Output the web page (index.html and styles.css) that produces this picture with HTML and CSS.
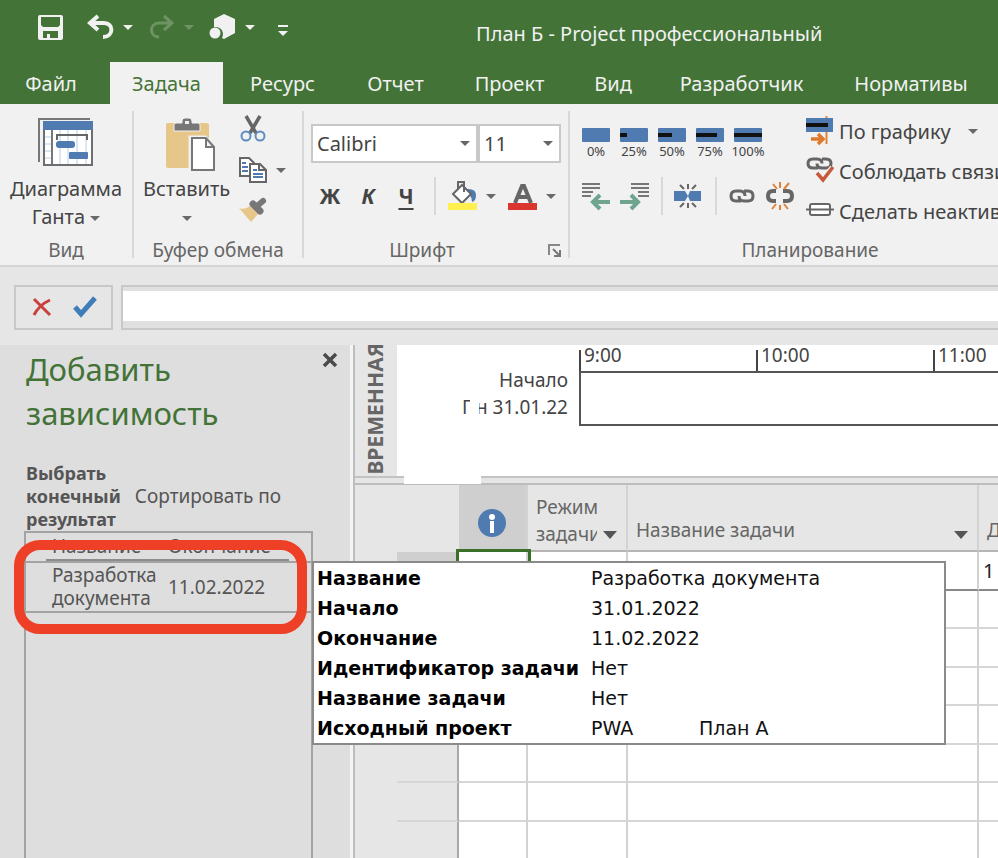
FILE: index.html
```html
<!DOCTYPE html>
<html lang="ru">
<head>
<meta charset="UTF-8">
<title>План Б - Project профессиональный</title>
<link rel="stylesheet" href="styles.css">
</head>
<body>
<header class="titlebar">
	<div class="quick">
		<button type="button" aria-label="Сохранить">
			<svg width="26" height="26" viewBox="0 0 26 26"><path d="M1 3q0-2 2-2h21q2 0 2 2v21q0 2-2 2H3q-2 0-2-2z" fill="#f1f1f1"/><path d="M4 3h19v8l-2 2H6l-2-2z" fill="#437337"/><path d="M6 17h15v7H6z" fill="#437337"/><path d="M10 20h3v4h-3z" fill="#f1f1f1"/></svg>
		</button>
		<button type="button" class="undo" aria-label="Отменить">
			<svg width="28" height="26" viewBox="0 0 28 26"><path d="M11 2L3 9l8 7M4 9h13c10 0 10 14-1 14" fill="none" stroke="#f1f1f1" stroke-width="4"/></svg>
			<span class="caret light"></span>
		</button>
		<button type="button" class="redo" aria-label="Вернуть">
			<svg width="28" height="26" viewBox="0 0 28 26"><path d="M16 2l8 7-8 7M23 9H11C1 9 1 23 11 23" fill="none" stroke="#6d9462" stroke-width="3"/></svg>
			<span class="caret faded"></span>
		</button>
		<button type="button" class="shape" aria-label="Фигуры">
			<svg width="28" height="26" viewBox="0 0 28 26"><path d="M15 0l11 5v14l-11 6-2-1c3-6-1-12-8-11V5z" fill="#f1f1f1"/><circle cx="6" cy="19" r="5.500" fill="#f1f1f1"/></svg>
			<span class="caret light"></span>
		</button>
		<button type="button" class="more" aria-label="Настройка панели">
			<svg width="10" height="12" viewBox="0 0 10 12"><path d="M0 1h10" stroke="#f1f1f1" stroke-width="2"/><path d="M0 6h10l-5 5z" fill="#f1f1f1"/></svg>
		</button>
	</div>
	<h1>План Б - Project профессиональный</h1>
</header>
<nav class="tabs">
	<button type="button">Файл</button>
	<button type="button" class="active">Задача</button>
	<button type="button">Ресурс</button>
	<button type="button">Отчет</button>
	<button type="button">Проект</button>
	<button type="button">Вид</button>
	<button type="button">Разработчик</button>
	<button type="button">Нормативы</button>
</nav>

<div class="ribbon">
	<section class="group group-view">
		<button type="button" class="big">
			<svg width="56" height="48" viewBox="0 0 56 48"><path d="M1 44V1h51" fill="none" stroke="#777" stroke-width="2"/><path d="M6 4h48v43H6z" fill="#fff" stroke="#6e6e6e" stroke-width="2"/><path d="M5 3h50v9H5z" fill="#4f7bb0"/><path d="M22 12v34M30 12v34M39 12v34M48 12v34M7 19h6M7 26h6M7 33h6M7 40h6" stroke="#b5cfe8"/><path d="M14 12v34" stroke="#777" stroke-width="2"/><path d="M19 22v-5h30v5" fill="none" stroke="#666" stroke-width="2"/><rect x="18" y="23" width="19" height="7" rx="3" fill="#4f7bb0"/><rect x="31" y="34" width="19" height="7" rx="1" fill="#4f7bb0"/></svg>
			<span>Диаграмма<br>Ганта <i class="caret"></i></span>
		</button>
		<h2>Вид</h2>
	</section>
	<section class="group group-clip">
		<div class="clip">
			<button type="button" class="big paste">
				<svg width="50" height="54" viewBox="0 0 50 54"><rect y="5" width="43" height="45" rx="2" fill="#e7c789"/><path d="M8 13V7q0-2 2-2h6V3q0-3 3-3h4q3 0 3 3v2h6q2 0 2 2v6z" fill="#777" stroke="#f1f1f1"/><path d="M19 3h4v3h-4z" fill="#f1f1f1"/><path d="M25 20h14l10 10v23H25z" fill="#fff" stroke="#f1f1f1" stroke-width="5"/><path d="M26 20h14l8 9v23H26zM40 20v9h8" fill="#fff" stroke="#777" stroke-width="2"/></svg>
				<span>Вставить<br><i class="caret"></i></span>
			</button>
			<div class="stack">
				<button type="button" aria-label="Вырезать">
					<svg width="28" height="28" viewBox="0 0 28 28"><path d="M7 1l10 17M21 1L11 18" stroke="#666" stroke-width="3.500"/><circle cx="7" cy="21" r="4.500" fill="none" stroke="#5b8cc2" stroke-width="2"/><circle cx="21" cy="21" r="4.500" fill="none" stroke="#5b8cc2" stroke-width="2"/></svg>
				</button>
				<button type="button" aria-label="Копировать">
					<svg width="28" height="26" viewBox="0 0 28 26"><path d="M1 1h9l5 5v13H1z" fill="#fff" stroke="#666" stroke-width="2"/><path d="M3 6h4M3 10h6M3 14h6" stroke="#4f7bb0" stroke-width="2"/><path d="M11 7h10l6 6v12H11zM20 7v6h7" fill="#fff" stroke="#666" stroke-width="2"/><path d="M14 13h4M14 17h10M14 20h10" stroke="#4f7bb0" stroke-width="2"/></svg>
					<span class="caret"></span>
				</button>
				<button type="button" aria-label="Формат по образцу">
					<svg width="28" height="26" viewBox="0 0 28 26"><path d="M0 11c5 2 8 0 11-2l8 8-7 8z" fill="#e7c789"/><path d="M14 7l7 7" stroke="#777" stroke-width="7" stroke-linecap="round"/><path d="M18 9l6-5" stroke="#777" stroke-width="6" stroke-linecap="round"/></svg>
				</button>
			</div>
		</div>
		<h2>Буфер обмена</h2>
	</section>
	<section class="group group-font">
		<div class="pickers">
			<label class="pick wide"><select aria-label="Шрифт"><option>Calibri</option></select></label>
			<label class="pick"><select aria-label="Размер"><option>11</option></select></label>
		</div>
		<div class="tools">
			<button type="button" class="glyph">Ж</button>
			<button type="button" class="glyph italic">К</button>
			<button type="button" class="glyph under">Ч</button>
			<i class="line"></i>
			<button type="button" class="color" aria-label="Цвет фона">
				<svg width="30" height="30" viewBox="0 0 30 30"><path d="M18 8q10-1 10 6 0 6-4 7q0-6-5-9z" fill="#4f7bb0"/><path d="M14 4l9 9-9 9-9-9z" fill="#fff" stroke="#666" stroke-width="2"/><path d="M10 9V1h6v10" fill="none" stroke="#666" stroke-width="2"/><path d="M0 22h29v7H0z" fill="#fff04f"/></svg>
				<span class="caret"></span>
			</button>
			<button type="button" class="color" aria-label="Цвет текста">
				<svg width="30" height="30" viewBox="0 0 30 30"><path d="M7 22l7-17h2l7 17M10 16h10" fill="none" stroke="#666" stroke-width="4"/><path d="M0 22h29v7H0z" fill="#db352f"/></svg>
				<span class="caret"></span>
			</button>
		</div>
		<h2>Шрифт</h2>
		<button type="button" class="launch" aria-label="Параметры шрифта">
			<svg width="14" height="14" viewBox="0 0 14 14"><path d="M1 11V1h11" fill="none" stroke="#888" stroke-width="2"/><path d="M5 5l7 7M12 6v6H6" fill="none" stroke="#777" stroke-width="2"/></svg>
		</button>
	</section>
	<section class="group group-plan">
		<div class="plan">
			<div class="plan-left">
				<div class="percents">
					<button type="button"><svg width="28" height="14"><rect width="28" height="14" rx="1" fill="#4f7bb0"/></svg>0%</button>
					<button type="button"><svg width="28" height="14"><rect width="28" height="14" rx="1" fill="#4f7bb0"/><path d="M0 7h7" stroke="#111" stroke-width="4"/></svg>25%</button>
					<button type="button"><svg width="28" height="14"><rect width="28" height="14" rx="1" fill="#4f7bb0"/><path d="M0 7h14" stroke="#111" stroke-width="4"/></svg>50%</button>
					<button type="button"><svg width="28" height="14"><rect width="28" height="14" rx="1" fill="#4f7bb0"/><path d="M0 7h21" stroke="#111" stroke-width="4"/></svg>75%</button>
					<button type="button"><svg width="28" height="14"><rect width="28" height="14" rx="1" fill="#4f7bb0"/><path d="M0 7h28" stroke="#111" stroke-width="4"/></svg>100%</button>
				</div>
				<div class="links">
					<button type="button" aria-label="Повысить уровень"><svg width="30" height="30" viewBox="0 0 30 30"><path d="M0 3h18M0 7h18M0 11h11M0 15h9" stroke="#777" stroke-width="2"/><path d="M28 21H11M18 14l-7 7 7 7" fill="none" stroke="#6fa48e" stroke-width="4"/></svg></button>
					<button type="button" aria-label="Понизить уровень"><svg width="30" height="30" viewBox="0 0 30 30"><path d="M11 3h18M11 7h18M18 11h11M18 15h11" stroke="#777" stroke-width="2"/><path d="M0 21h18M11 14l7 7-7 7" fill="none" stroke="#6fa48e" stroke-width="4"/></svg></button>
					<i class="line"></i>
					<button type="button" aria-label="Прервать задачу"><svg width="30" height="30" viewBox="0 0 30 30"><path d="M0 10h11l3 5-3 5H0zM27 10H16l-2 5 2 5h11z" fill="#4f7bb0"/><path d="M14 3v5M6 4l4 4M22 4l-4 4M14 27v-5M6 26l4-4M22 26l-4-4" stroke="#666" stroke-width="2"/></svg></button>
					<i class="line"></i>
					<button type="button" aria-label="Связать задачи"><svg width="30" height="30" viewBox="0 0 30 30"><path d="M13 20H8q-5 0-5-5t5-5h4q5 0 5 5M16 10h4q5 0 5 5t-5 5h-4q-5 0-5-5" fill="none" stroke="#666" stroke-width="3"/></svg></button>
					<button type="button" aria-label="Разорвать связь"><svg width="28" height="30" viewBox="0 0 28 30"><path d="M10 10H7q-5 0-5 5t5 5h3M17 20h4q5 0 5-5t-5-5h-4" fill="none" stroke="#666" stroke-width="4"/><path d="M14 1v6M7 3l4 5M23 2l-5 6M14 29v-5M6 28l4-5M22 28l-4-5" stroke="#df8238" stroke-width="2"/></svg></button>
				</div>
			</div>
			<div class="plan-right">
				<button type="button"><svg width="28" height="30" viewBox="0 0 28 30"><path d="M20.500 0v28" stroke="#df8238" stroke-width="2"/><path d="M0 2h27v14H0z" fill="#4f7bb0"/><path d="M0 9h22" stroke="#111" stroke-width="4"/><path d="M5 23h11M12 18l5 5-5 5" fill="none" stroke="#df7a2c" stroke-width="3.500"/></svg>По графику<span class="caret"></span></button>
				<button type="button"><svg width="28" height="30" viewBox="0 0 28 30"><path d="M12 12H7q-5 0-5-4.500t5-4.500h4q5 0 5 4.500M16 3h4q5 0 5 4.500t-5 4.500h-4q-5 0-5-4.500" fill="none" stroke="#666" stroke-width="3"/><path d="M11 17l6 7 10-12" fill="none" stroke="#f1f1f1" stroke-width="7"/><path d="M11 17l6 7 10-13" fill="none" stroke="#c85a3c" stroke-width="3.500"/></svg>Соблюдать связи</button>
				<button type="button"><svg width="28" height="30" viewBox="0 0 28 30"><rect x="4" y="8" width="20" height="11" rx="2" fill="#fff" stroke="#666" stroke-width="2"/><path d="M0 13.500h28" stroke="#666" stroke-width="2"/></svg>Сделать неактивной</button>
			</div>
		</div>
		<h2>Планирование</h2>
	</section>
</div>

<div class="entry">
	<div class="entry-buttons">
		<button type="button" aria-label="Отмена"><svg width="24" height="24" viewBox="0 0 24 24"><path d="M4 3l16 16M4 19Q9 9 20 4" fill="none" stroke="#c9413a" stroke-width="3"/></svg></button>
		<button type="button" aria-label="Ввод"><svg width="26" height="24" viewBox="0 0 26 24"><path d="M3 11l6 7L23 2" fill="none" stroke="#3f7db8" stroke-width="5"/></svg></button>
	</div>
	<div class="entry-field"><input type="text" aria-label="Строка ввода"></div>
</div>

<div class="work">
	<aside class="side">
		<div class="side-head">
			<h2>Добавить зависимость</h2>
			<button type="button" aria-label="Закрыть"><svg width="16" height="16" viewBox="0 0 16 16"><path d="M2 2l12 12M14 2L2 14" stroke="#4a4a4a" stroke-width="3.500"/></svg></button>
		</div>
		<div class="side-bar">
			<b>Выбрать<br>конечный<br>результат</b>
			<a href="#">Сортировать по</a>
		</div>
		<table class="results">
			<thead><tr><th>Название</th><th>Окончание</th></tr></thead>
			<tbody><tr><td>Разработка<br>документа</td><td>11.02.2022</td></tr></tbody>
		</table>
	</aside>
	<main class="main">
		<div class="timeline">
			<div class="timeline-name"><span>ВРЕМЕННАЯ</span></div>
			<div class="timeline-body">
				<div class="start">Начало<br><span>Пн 31.01.22</span></div>
				<div class="scale">
					<div class="hours"><span>9:00</span><span>10:00</span><span>11:00</span></div>
					<div class="track"></div>
				</div>
			</div>
		</div>
		<div class="splitter"><i></i></div>
		<div class="sheet">
			<table class="grid">
				<colgroup><col class="c-num"><col class="c-info"><col class="c-mode"><col class="c-name"><col class="c-dur"></colgroup>
				<thead>
					<tr>
						<th></th>
						<th class="info"><svg width="28" height="28" viewBox="0 0 28 28"><circle cx="14" cy="14" r="14" fill="#4f7bb0"/><circle cx="14" cy="8" r="3" fill="#fff"/><path d="M12 12h4v12h-4z" fill="#fff"/></svg></th>
						<th class="mode"><div class="cut">Режим задачи</div><i class="drop"></i></th>
						<th>Название задачи<i class="drop"></i></th>
						<th>Длительность</th>
					</tr>
				</thead>
				<tbody>
					<tr class="current"><th></th><td class="focus"></td><td></td><td></td><td>1 день</td></tr>
					<tr><th></th><td></td><td></td><td></td><td></td></tr>
					<tr><th></th><td></td><td></td><td></td><td></td></tr>
					<tr><th></th><td></td><td></td><td></td><td></td></tr>
					<tr><th></th><td></td><td></td><td></td><td></td></tr>
					<tr><th></th><td></td><td></td><td></td><td></td></tr>
					<tr><th></th><td></td><td></td><td></td><td></td></tr>
					<tr><th></th><td></td><td></td><td></td><td></td></tr>
				</tbody>
			</table>
		</div>
	</main>
	<dl class="tip">
		<dt>Название</dt><dd>Разработка документа</dd>
		<dt>Начало</dt><dd>31.01.2022</dd>
		<dt>Окончание</dt><dd>11.02.2022</dd>
		<dt>Идентификатор задачи</dt><dd>Нет</dd>
		<dt>Название задачи</dt><dd>Нет</dd>
		<dt>Исходный проект</dt><dd><span>PWA</span>План А</dd>
	</dl>
	<div class="marker"></div>
</div>
</body>
</html>
```
FILE: styles.css
```css
* {
	box-sizing: border-box;
}

body {
	margin: 0;
	height: 100vh;
	display: flex;
	flex-direction: column;
	overflow: hidden;
	background-color: #e6e6e6;
	color: #444;
	font-family: "Noto Sans", "Open Sans", sans-serif;
	font-size: 20px;
}

h1, h2, dl, dd {
	margin: 0;
	font-weight: normal;
}

button {
	padding: 0;
	border: none;
	background: none;
	color: inherit;
	font: inherit;
	white-space: nowrap;
}

svg {
	display: block;
	flex: none;
}

.caret {
	display: inline-block;
	flex: none;
	border: 5px solid transparent;
	border-top-color: #6a6a6a;
	border-bottom: none;
	vertical-align: middle;
}
.caret.light {
	border-top-color: #f1f1f1;
}
.caret.faded {
	border-top-color: #6d9462;
}

/* title and tabs */
.titlebar {
	display: flex;
	flex: none;
	height: 62px;
	background-color: #437337;
	color: #f1f1f1;
}
.titlebar h1 {
	padding-top: 20px;
	font-size: 20px;
	line-height: 28px;
	white-space: nowrap;
}
.quick {
	display: flex;
	flex: none;
	width: 476px;
	padding: 14px 0 0 37px;
}
.quick button {
	display: flex;
	gap: 8px;
	height: 26px;
	align-items: center;
	margin-right: 24px;
}
.quick .undo, .quick .redo, .quick .shape {
	margin-right: 15px;
}
.quick .more {
	margin-left: 8px;
	padding-top: 8px;
}
.tabs {
	display: grid;
	flex: none;
	grid-template-columns: 110px 113px 119px 107px 121px 86px 171px 168px;
	height: 42px;
	background-color: #437337;
	color: #f1f1f1;
}
.tabs button:first-child {
	padding-right: 8px;
}
.tabs .active {
	background-color: #f1f1f1;
	color: #437337;
}

/* ribbon */
.ribbon {
	display: flex;
	flex: none;
	height: 163px;
	padding: 7px 0;
	background-color: #f1f1f1;
	border-bottom: 2px solid #d5d5d5;
	overflow: hidden;
}
.group {
	position: relative;
	display: flex;
	flex: none;
	flex-direction: column;
	border-right: 2px solid #d8d8d8;
}
.group h2 {
	margin-top: auto;
	color: #666;
	font-size: 19px;
	line-height: 16px;
	text-align: center;
}
.group-view {
	width: 134px;
}
.group-clip {
	width: 170px;
}
.group-font {
	width: 266px;
}
.group-font h2 {
	padding-right: 28px;
}
.group-plan {
	width: 482px;
}
.big {
	display: flex;
	flex-direction: column;
	align-items: center;
	height: 120px;
	line-height: 28px;
	padding-top: 7px;
	justify-content: space-between;
}
.paste svg {
	margin-left: 8px;
}
.clip {
	display: flex;
	padding-left: 9px;
	gap: 9px;
}
.stack {
	display: flex;
	flex-direction: column;
	gap: 14px;
	padding-top: 4px;
}
.stack button {
	display: flex;
	align-items: center;
	gap: 9px;
}
.pickers {
	display: grid;
	grid-template-columns: 167px 83px;
	margin: 13px 0 0 7px;
}
.pick {
	position: relative;
}
.pick::after {
	content: "";
	position: absolute;
	right: 8px;
	top: 17px;
	border: 5px solid transparent;
	border-top-color: #666;
	border-bottom: none;
}
.pick select {
	display: block;
	width: 100%;
	height: 39px;
	padding: 0 4px;
	appearance: none;
	border: 2px solid #c8c8c8;
	border-radius: 0;
	background-color: #fff;
	color: #444;
	font: inherit;
}
.tools {
	display: flex;
	align-items: center;
	height: 38px;
	margin-top: 14px;
	padding-left: 10px;
}
.glyph {
	width: 38px;
	padding-right: 6px;
	font-size: 21px;
	font-weight: bold;
}
.italic {
	font-style: italic;
}
.under {
	text-decoration: underline;
	text-underline-offset: 4px;
}
.line {
	width: 2px;
	height: 38px;
	background-color: #d8d8d8;
}
.tools .line {
	margin: 0 12px 0 6px;
}
.color {
	display: flex;
	align-items: center;
	gap: 8px;
	width: 60px;
}
.launch {
	position: absolute;
	right: 6px;
	bottom: 0;
}
.plan {
	display: flex;
	gap: 12px;
	padding-left: 12px;
}
.plan-left {
	padding-top: 17px;
}
.percents {
	display: grid;
	grid-template-columns: repeat(5, 28px);
	gap: 10px;
}
.percents button {
	display: flex;
	flex-direction: column;
	align-items: center;
	font-size: 13px;
	line-height: 18px;
}
.links {
	display: flex;
	align-items: center;
	gap: 8px;
	margin-top: 17px;
}
.links .line {
	margin: 0 3px;
}
.plan-right button {
	display: flex;
	align-items: center;
	gap: 5px;
	height: 40px;
}
.plan-right .caret {
	margin-left: 12px;
}

/* entry bar */
.entry {
	display: flex;
	flex: none;
	gap: 8px;
	height: 78px;
	padding: 18px 0 16px 14px;
}
.entry-buttons, .entry-field {
	height: 45px;
	border: 2px solid #c8c8c8;
}
.entry-buttons {
	display: flex;
	align-items: center;
	justify-content: center;
	gap: 18px;
	width: 99px;
}
.entry-field {
	flex: 1;
	padding: 4px 0 7px;
	border-right: none;
	background-color: #e0e0e0;
}
.entry-field input {
	display: block;
	width: 100%;
	height: 100%;
	padding: 0 8px;
	border: none;
	background-color: #fff;
	font: inherit;
}

/* work area */
.work {
	position: relative;
	display: flex;
	flex: 1;
	min-height: 0;
}
.side {
	display: flex;
	flex: none;
	flex-direction: column;
	width: 353px;
	padding-left: 24px;
	border-right: 3px solid #f4f4f4;
	background-color: #dedede;
}
.side-head {
	display: flex;
	justify-content: space-between;
	align-items: flex-start;
	padding: 2px 12px 0 2px;
}
.side-head h2 {
	width: 220px;
	color: #437337;
	font-size: 31px;
	line-height: 44px;
}
.side-head button {
	padding-top: 5px;
}
.side-bar {
	display: flex;
	align-items: center;
	gap: 14px;
	padding: 27px 0 0 2px;
	color: #555;
	font-size: 19px;
	line-height: 23px;
}
.side-bar b {
	font-size: 18px;
}
.side-bar a {
	color: inherit;
	text-decoration: none;
}
.results {
	display: block;
	flex: 1;
	width: 289px;
	border: 2px solid #a3a3a3;
	border-bottom: none;
	color: #555;
	font-size: 19px;
	line-height: 23px;
}
.results thead, .results tbody {
	display: block;
}
.results tr {
	display: grid;
	grid-template-columns: 116px 1fr;
	align-items: center;
	padding-left: 26px;
}
.results thead tr {
	height: 28px;
	margin: 0 22px 0 20px;
	padding-left: 6px;
	border-bottom: 2px solid #8c8c8c;
}
.results tbody tr {
	height: 52px;
	border: 2px solid #a3a3a3;
	border-width: 2px 0;
}
.results th, .results td {
	padding: 0;
	font-weight: normal;
	text-align: left;
}
.main {
	display: flex;
	flex: 1;
	flex-direction: column;
	min-width: 0;
	border-left: 2px solid #bdbdbd;
}
.timeline {
	display: flex;
	flex: none;
	height: 131px;
	overflow: hidden;
}
.timeline-name {
	display: flex;
	flex: none;
	align-items: flex-end;
	width: 42px;
	padding: 0 0 1px 7px;
	color: #666;
	font-size: 21px;
	font-weight: bold;
	line-height: 27px;
}
.timeline-name span {
	writing-mode: vertical-rl;
	transform: rotate(180deg);
	white-space: nowrap;
}
.timeline-body {
	display: flex;
	flex: 1;
	min-width: 0;
	background-color: #fff;
	font-size: 19px;
}
.start {
	flex: none;
	width: 182px;
	padding: 22px 11px 0 0;
	line-height: 27px;
	text-align: right;
}
.start span {
	position: relative;
}
.start span::before {
	content: "";
	position: absolute;
	left: 8px;
	top: 0;
	width: 9px;
	height: 25px;
	background-color: #fff;
}
.scale {
	flex: 1;
	overflow: hidden;
}
.hours {
	display: grid;
	grid-template-columns: repeat(3, 177px);
	height: 26px;
	padding-top: 5px;
}
.hours span {
	padding-left: 3px;
	border-left: 2px solid #444;
	line-height: 10px;
}
.track {
	height: 55px;
	border: 2px solid #555;
	border-right: none;
}
.splitter {
	flex: none;
	height: 9px;
	padding-left: 49px;
	border-top: 2px solid #c3c3c3;
	border-bottom: 2px solid #bdbdbd;
}
.splitter i {
	position: relative;
	top: -2px;
	display: block;
	width: 77px;
	height: 8px;
	background-color: #fff;
}
.sheet {
	flex: 1;
	min-height: 0;
	padding-left: 42px;
	overflow: hidden;
}
.grid {
	width: 800px;
	border-spacing: 0;
	table-layout: fixed;
}
.c-num {
	width: 62px;
}
.c-info {
	width: 69px;
}
.c-mode {
	width: 100px;
}
.c-name {
	width: 351px;
}
.grid th, .grid td {
	padding: 0 4px;
	border-right: 2px solid #d2d2d2;
	border-bottom: 2px solid #d6d6d6;
	font-weight: normal;
	text-align: left;
	white-space: nowrap;
}
.grid td {
	background-color: #fff;
}
.grid tbody tr {
	height: 38px;
}
.grid tbody tr:nth-child(odd) {
	height: 39px;
}
.grid tbody th {
	border-right-color: #a8a8a8;
}
.grid thead th {
	position: relative;
	height: 67px;
	padding: 0 8px 6px;
	border-bottom-color: #b5b5b5;
	color: #666;
	font-size: 19px;
	line-height: 27px;
	vertical-align: bottom;
}
.grid thead th:first-child {
	border-color: transparent;
}
.grid thead .mode {
	padding-bottom: 2px;
}
.grid thead .info {
	padding: 11px 0 0 19px;
	background-color: #cfcfcf;
	vertical-align: middle;
}
.cut {
	width: 61px;
	overflow: hidden;
	white-space: normal;
}
.drop {
	position: absolute;
	right: 9px;
	bottom: 11px;
	border: 7px solid transparent;
	border-top: 8px solid #555;
	border-bottom: none;
}
.grid .current th {
	background-color: #cfcfcf;
}
.grid .current td {
	border-bottom-color: #888;
	color: #222;
}
.grid .current .focus {
	position: relative;
	outline: 3px solid #3a7029;
}

/* task card over the sheet */
.tip {
	position: absolute;
	left: 312px;
	top: 216px;
	display: grid;
	grid-template-columns: 274px 1fr;
	width: 634px;
	padding: 0 3px;
	border: 2px solid #8a8a8a;
	background-color: #fff;
	color: #111;
	font-family: "DejaVu Sans", Verdana, sans-serif;
	font-size: 19px;
	line-height: 30px;
	white-space: nowrap;
}
.tip dt {
	color: #000;
	font-weight: bold;
}
.tip span {
	display: inline-block;
	width: 108px;
}
.marker {
	position: absolute;
	left: 14px;
	top: 195px;
	width: 293px;
	height: 94px;
	border: 10px solid #ed4027;
	border-radius: 26px;
}
```
